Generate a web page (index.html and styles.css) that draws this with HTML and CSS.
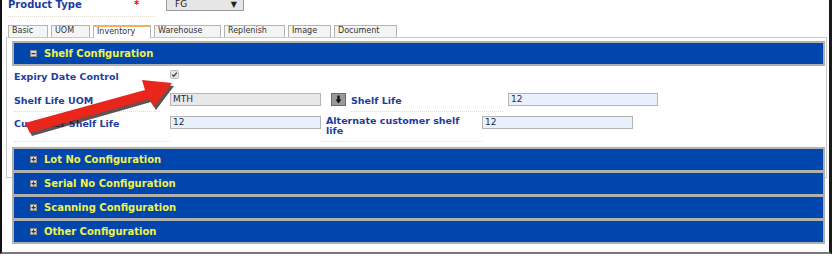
FILE: index.html
```html
<!DOCTYPE html>
<html>
<head>
    <title>Item Master - Inventory</title>
    <link rel="stylesheet" href="styles.css">
</head>
<body>
    <div class="screen">
        <div class="top-row">
            <span class="top-label">Product Type</span>
            <span class="required">*</span>
            <span class="select">FG<span class="caret">&#9660;</span></span>
        </div>
        <div class="top-dots"></div>

        <div class="tabs">
            <span class="tab w-basic">Basic</span>
            <span class="tab w-uom">UOM</span>
            <span class="tab tab-active w-inv">Inventory</span>
            <span class="tab w-wh">Warehouse</span>
            <span class="tab w-rep">Replenish</span>
            <span class="tab w-img">Image</span>
            <span class="tab w-doc">Document</span>
        </div>

        <div class="panel">
            <div class="section-head">
                <svg class="toggle" width="7" height="7" viewBox="0 0 7 7"><rect x="0.5" y="0.5" width="6" height="6" fill="#d8d8d8" stroke="#8a8a8a"/><rect x="1.5" y="3" width="4" height="1.2" fill="#333"/></svg>
                <span>Shelf Configuration</span>
            </div>

            <div class="row row-first">
                <span class="label">Expiry Date Control</span>
                <span class="check">
                    <svg width="9" height="9" viewBox="0 0 9 9"><rect x="0.5" y="0.5" width="8" height="8" rx="1" fill="#e4e4e4" stroke="#b8b8b8"/><path d="M2.2 4.6 L3.8 6.2 L6.8 2.6" fill="none" stroke="#444" stroke-width="1.3"/></svg>
                </span>
            </div>

            <div class="row row-second">
                <span class="label">Shelf Life UOM</span>
                <span class="input input-grey">MTH</span>
                <span class="lookup">
                    <svg width="15" height="13" viewBox="0 0 15 13"><rect x="0" y="0" width="15" height="13" fill="#6a6a6a"/><rect x="1" y="1" width="13" height="11" fill="#9a9a9a"/><path d="M6.3 2.5 H8.7 V6.5 H10.5 L7.5 10.5 L4.5 6.5 H6.3 Z" fill="#111"/></svg>
                </span>
                <span class="label label-mid">Shelf Life</span>
                <span class="input input-blue input-life">12</span>
            </div>

            <div class="row row-third">
                <span class="label">Customer Shelf Life</span>
                <span class="input input-blue">12</span>
                <span class="label label-alt">Alternate customer shelf life</span>
                <span class="input input-blue input-alt">12</span>
            </div>

            <div class="section-head section-collapsed">
                <svg class="toggle" width="7" height="7" viewBox="0 0 7 7"><rect x="0.5" y="0.5" width="6" height="6" fill="#d8d8d8" stroke="#8a8a8a"/><rect x="1.5" y="3" width="4" height="1.2" fill="#333"/><rect x="2.9" y="1.5" width="1.2" height="4" fill="#333"/></svg>
                <span>Lot No Configuration</span>
            </div>
            <div class="section-head">
                <svg class="toggle" width="7" height="7" viewBox="0 0 7 7"><rect x="0.5" y="0.5" width="6" height="6" fill="#d8d8d8" stroke="#8a8a8a"/><rect x="1.5" y="3" width="4" height="1.2" fill="#333"/><rect x="2.9" y="1.5" width="1.2" height="4" fill="#333"/></svg>
                <span>Serial No Configuration</span>
            </div>
            <div class="section-head">
                <svg class="toggle" width="7" height="7" viewBox="0 0 7 7"><rect x="0.5" y="0.5" width="6" height="6" fill="#d8d8d8" stroke="#8a8a8a"/><rect x="1.5" y="3" width="4" height="1.2" fill="#333"/><rect x="2.9" y="1.5" width="1.2" height="4" fill="#333"/></svg>
                <span>Scanning Configuration</span>
            </div>
            <div class="section-head">
                <svg class="toggle" width="7" height="7" viewBox="0 0 7 7"><rect x="0.5" y="0.5" width="6" height="6" fill="#d8d8d8" stroke="#8a8a8a"/><rect x="1.5" y="3" width="4" height="1.2" fill="#333"/><rect x="2.9" y="1.5" width="1.2" height="4" fill="#333"/></svg>
                <span>Other Configuration</span>
            </div>
        </div>

        <!-- callout arrow pointing at the checkbox -->
        <svg class="callout" width="832" height="256" viewBox="0 0 832 256">
            <g transform="translate(2,3)" fill="#2a1a1a" opacity="0.75">
                <path d="M25 123 L145 90 L142 80 L172 83 L154 107 L149 99 L30 133 Z"/>
            </g>
            <path d="M25 123 L145 90 L142 80 L172 83 L154 107 L149 99 L30 133 Z" fill="#e8261c"/>
        </svg>
    </div>
</body>
</html>
```

FILE: styles.css
```css
body {
    margin: 0;
    padding: 0;
    background-color: #ffffff;
    font-family: "DejaVu Sans", Verdana, sans-serif;
}

.screen {
    position: relative;
    width: 832px;
    height: 254px;
    box-sizing: border-box;
    border-left: 2px solid #111;
    border-right: 3px solid #1a1a1a;
    border-bottom: 2px solid #7a7a7a;
    overflow: hidden;
}

.top-row {
    display: flex;
    align-items: center;
    height: 14px;
    margin-top: -3px;
    padding-left: 6px;
}

.top-label {
    width: 126px;
    font-size: 10px;
    font-weight: bold;
    color: #1d3c9e;
}

.required {
    width: 30px;
    color: #e01010;
    font-size: 10px;
    font-weight: bold;
    line-height: 10px;
    padding-top: 2px;
}

.select {
    display: flex;
    justify-content: space-between;
    box-sizing: border-box;
    width: 78px;
    height: 13px;
    padding: 0 6px 0 8px;
    margin-left: 2px;
    border: 1px solid #9a9a9a;
    background-color: #e6e6e6;
    font-size: 9px;
    line-height: 11px;
    color: #222;
}

.caret {
    font-size: 8px;
}

.top-dots {
    width: 147px;
    margin: 5px 0 0 6px;
    border-bottom: 1px dotted #e2dccf;
}

.tabs {
    display: flex;
    gap: 3px;
    margin-top: 8px;
    padding-left: 6px;
    height: 12px;
}

.tab {
    box-sizing: border-box;
    height: 12px;
    padding-left: 3px;
    border: 1px solid #b4b4b4;
    border-bottom: none;
    background-color: #f4f4f4;
    font-size: 8px;
    line-height: 10px;
    color: #333;
}

.tab-active {
    background-color: #ffffff;
    border-top: 2px solid #f0b060;
    line-height: 9px;
    position: relative;
    z-index: 1;
    height: 13px;
}

.w-basic { width: 40px; }
.w-uom { width: 39px; }
.w-inv { width: 58px; }
.w-wh { width: 67px; }
.w-rep { width: 61px; }
.w-img { width: 43px; }
.w-doc { width: 63px; }

.panel {
    box-sizing: border-box;
    height: 141px;
    margin: 0 2px 0 4px;
    padding: 3px 1px 0 5px;
    border: 1px solid #c8c8c8;
}

.section-head {
    display: flex;
    align-items: center;
    gap: 7px;
    box-sizing: border-box;
    height: 25px;
    padding-left: 16px;
    border: 2px solid #b0b0b0;
    background-color: #0046ad;
    color: #f2f24a;
    font-size: 10px;
    font-weight: bold;
}

.section-head + .section-head {
    border-top-width: 1px;
    height: 24px;
}

.section-collapsed {
    margin-top: 5px;
    border-top-width: 2px;
}

.toggle {
    flex: none;
}

.row {
    display: flex;
    padding-left: 2px;
}

.label {
    box-sizing: border-box;
    width: 156px;
    font-size: 9.5px;
    font-weight: bold;
    color: #1d3c9e;
}

.row-first {
    height: 20px;
    align-items: center;
    margin-top: 0;
}

.check {
    display: flex;
    margin-top: -3px;
}

.row-second {
    align-items: flex-start;
    margin-top: 6px;
}

.row-second .label {
    height: 20px;
    padding-top: 3px;
    border-bottom: 1px dotted #e2dccf;
    width: 146px;
    margin-right: 10px;
}

.row-third {
    align-items: flex-start;
    margin-top: 3px;
}

.row-third .label {
    height: 27px;
    padding-top: 3px;
    border-bottom: 1px dotted #e2dccf;
}

.input {
    box-sizing: border-box;
    width: 151px;
    height: 13px;
    margin-top: 1px;
    padding-left: 2px;
    border: 1px solid #b4b4b4;
    font-size: 9px;
    line-height: 11px;
    color: #2a2a4a;
}

.input-grey {
    background-color: #e8e8e8;
}

.input-blue {
    background-color: #e8f0fc;
}

.lookup {
    display: flex;
    margin: 1px 5px 0 10px;
}

.row-second .label-mid {
    width: 152px;
    padding-top: 3px;
    margin-right: 5px;
    border-bottom: 1px dotted #e2dccf;
}

.input-life {
    width: 150px;
}

.row-third .label-alt {
    width: 161px;
    padding: 1px 18px 0 5px;
    line-height: 10px;
}

.input-alt {
    width: 151px;
}

.callout {
    position: absolute;
    left: -2px;
    top: 0;
    pointer-events: none;
}
```
